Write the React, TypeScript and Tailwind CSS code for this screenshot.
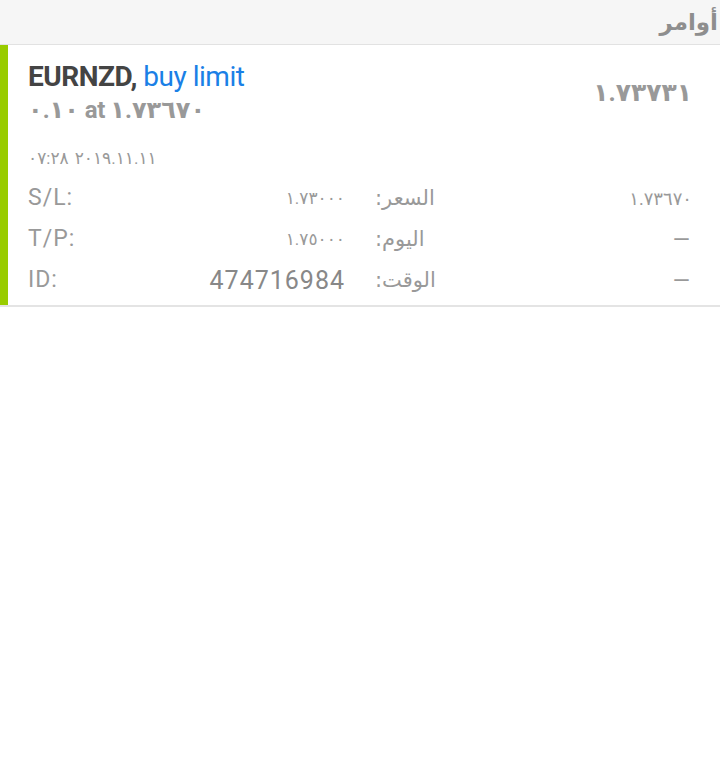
export default function App() {
  const rows = [
    { l: "S/L:", v: "١.٧٣٠٠٠", al: "السعر:", av: "١.٧٣٦٧٠", big: false },
    { l: "T/P:", v: "١.٧٥٠٠٠", al: "اليوم:", av: "—", big: false },
    { l: "ID:", v: "474716984", al: "الوقت:", av: "—", big: true },
  ];

  return (
    <div className="w-[720px] h-[767px] bg-white" style={{ fontFamily: "Roboto, 'DejaVu Sans', sans-serif" }}>
      {/* Header */}
      <div className="h-[45px] bg-[#f6f6f6] border-b border-[#e2e2e2] flex items-center justify-end pr-[2px]">
        <span dir="rtl" className="text-[23px] font-bold text-[#8e8e8e] leading-none" style={{ fontFamily: "'DejaVu Sans', sans-serif" }}>
          أوامر
        </span>
      </div>

      {/* Order card */}
      <div className="flex border-b-2 border-[#e4e4e4]">
        <div className="w-[8px] bg-[#99cc00]" />
        <div className="flex-1 pl-[20px] pr-[28px] pt-[15px] pb-[4px]">
          <div className="flex justify-between">
            <div>
              <div className="text-[28px] leading-[34px] tracking-[-0.5px]">
                <span className="font-bold text-[#444444]">EURNZD,</span>{" "}
                <span className="text-[#1a80e6]">buy limit</span>
              </div>
              <div className="mt-[2px] text-[24px] leading-[28px] font-bold text-[#999999] tracking-[-0.5px]">
                ٠.١٠ at ١.٧٣٦٧٠
              </div>
            </div>
            <div className="pt-[20px] text-[25px] font-bold text-[#999999] leading-none">١.٧٣٧٣١</div>
          </div>

          <div className="mt-[24px] text-[17px] text-[#999999] leading-[20px]">
            <bdo dir="ltr">
              <span>٠٧:٢٨</span>
              <span className="ml-[6px]">٢٠١٩.١١.١١</span>
            </bdo>
          </div>

          <div className="mt-[10px] grid grid-cols-2 gap-x-[30px]">
            {rows.map((r) => (
              <div key={r.l} className="contents">
                <div className="h-[41px] flex items-center justify-between text-[#999999]">
                  <span className="text-[23px] tracking-[1px]">{r.l}</span>
                  <span className={r.big ? "text-[25px] tracking-[1px] text-[#888888]" : "text-[17px]"}>{r.v}</span>
                </div>
                <div className="h-[41px] flex items-center justify-between text-[#999999]">
                  <span dir="rtl" className="text-[21px]" style={{ fontFamily: "'DejaVu Sans', sans-serif" }}>{r.al}</span>
                  <span className={r.av === "—" ? "text-[22px] pr-[2px]" : "text-[18px]"}>{r.av}</span>
                </div>
              </div>
            ))}
          </div>
        </div>
      </div>
    </div>
  );
}
